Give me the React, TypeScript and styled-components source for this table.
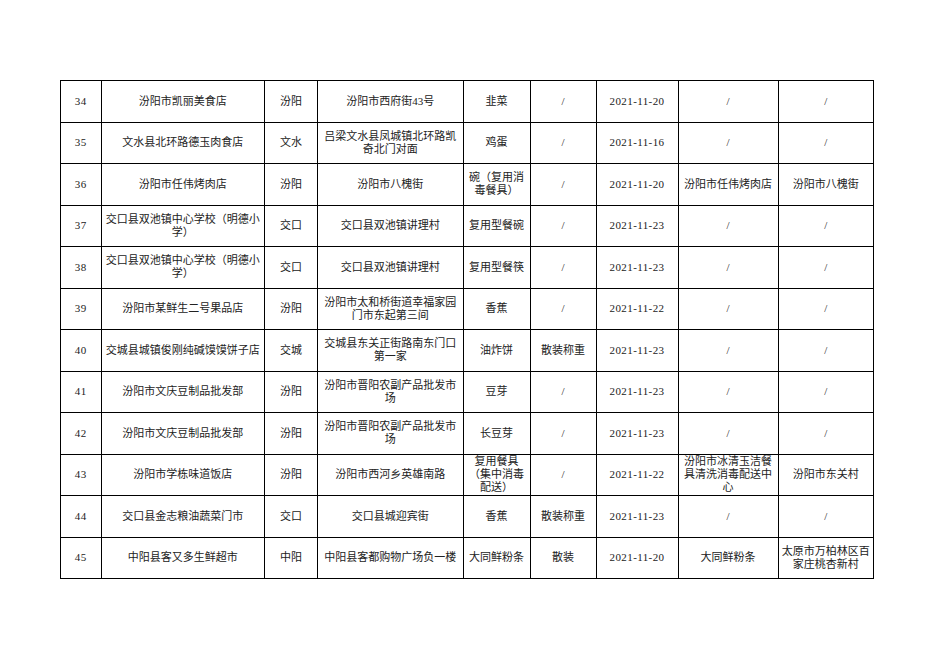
import styled, { createGlobalStyle } from "styled-components";

const GlobalStyle = createGlobalStyle`
    html, body {
        margin: 0;
        padding: 0;
        background: #ffffff;
    }
`;

const Page = styled.div`
    padding: 80px 0 0 60px;
    font-family: "Liberation Serif", "Noto Sans CJK SC", serif;
    color: #222;
`;

const Table = styled.table`
    width: 813px;
    table-layout: fixed;
    border-collapse: collapse;
    border: 1px solid #000;
`;

const Row = styled.tr`
    height: 41.5px;
`;

const Cell = styled.td<{ $numeric?: boolean }>`
    border: 1px solid #000;
    padding: 0 3px;
    font-size: 11px;
    line-height: 13px;
    letter-spacing: ${(p) => (p.$numeric ? "0.4px" : "0")};
    text-align: center;
    vertical-align: middle;
    word-break: break-all;
`;

type Record = {
    no: number;
    name: string;
    area: string;
    address: string;
    food: string;
    spec: string;
    date: string;
    maker: string;
    makerAddress: string;
};

const widths = [40.5, 163.5, 53, 145.5, 67, 66, 82, 100, 95.5];

const records: Record[] = [
    { no: 34, name: "汾阳市凯丽美食店", area: "汾阳", address: "汾阳市西府街43号", food: "韭菜", spec: "/", date: "2021-11-20", maker: "/", makerAddress: "/" },
    { no: 35, name: "文水县北环路德玉肉食店", area: "文水", address: "吕梁文水县凤城镇北环路凯奇北门对面", food: "鸡蛋", spec: "/", date: "2021-11-16", maker: "/", makerAddress: "/" },
    { no: 36, name: "汾阳市任伟烤肉店", area: "汾阳", address: "汾阳市八槐街", food: "碗（复用消毒餐具）", spec: "/", date: "2021-11-20", maker: "汾阳市任伟烤肉店", makerAddress: "汾阳市八槐街" },
    { no: 37, name: "交口县双池镇中心学校（明德小学）", area: "交口", address: "交口县双池镇讲理村", food: "复用型餐碗", spec: "/", date: "2021-11-23", maker: "/", makerAddress: "/" },
    { no: 38, name: "交口县双池镇中心学校（明德小学）", area: "交口", address: "交口县双池镇讲理村", food: "复用型餐筷", spec: "/", date: "2021-11-23", maker: "/", makerAddress: "/" },
    { no: 39, name: "汾阳市某鲜生二号果品店", area: "汾阳", address: "汾阳市太和桥街道幸福家园门市东起第三间", food: "香蕉", spec: "/", date: "2021-11-22", maker: "/", makerAddress: "/" },
    { no: 40, name: "交城县城镇俊刚纯碱馍馍饼子店", area: "交城", address: "交城县东关正街路南东门口第一家", food: "油炸饼", spec: "散装称重", date: "2021-11-23", maker: "/", makerAddress: "/" },
    { no: 41, name: "汾阳市文庆豆制品批发部", area: "汾阳", address: "汾阳市晋阳农副产品批发市场", food: "豆芽", spec: "/", date: "2021-11-23", maker: "/", makerAddress: "/" },
    { no: 42, name: "汾阳市文庆豆制品批发部", area: "汾阳", address: "汾阳市晋阳农副产品批发市场", food: "长豆芽", spec: "/", date: "2021-11-23", maker: "/", makerAddress: "/" },
    { no: 43, name: "汾阳市学栋味道饭店", area: "汾阳", address: "汾阳市西河乡英雄南路", food: "复用餐具（集中消毒配送）", spec: "/", date: "2021-11-22", maker: "汾阳市冰清玉洁餐具清洗消毒配送中心", makerAddress: "汾阳市东关村" },
    { no: 44, name: "交口县金志粮油蔬菜门市", area: "交口", address: "交口县城迎宾街", food: "香蕉", spec: "散装称重", date: "2021-11-23", maker: "/", makerAddress: "/" },
    { no: 45, name: "中阳县客又多生鲜超市", area: "中阳", address: "中阳县客都购物广场负一楼", food: "大同鲜粉条", spec: "散装", date: "2021-11-20", maker: "大同鲜粉条", makerAddress: "太原市万柏林区百家庄桃杏新村" },
];

function App() {
    return (
        <Page>
            <GlobalStyle />
            <Table>
                <colgroup>
                    {widths.map((w, i) => (
                        <col key={i} style={{ width: w }} />
                    ))}
                </colgroup>
                <tbody>
                    {records.map((r) => (
                        <Row key={r.no}>
                            <Cell $numeric>{r.no}</Cell>
                            <Cell>{r.name}</Cell>
                            <Cell>{r.area}</Cell>
                            <Cell>{r.address}</Cell>
                            <Cell>{r.food}</Cell>
                            <Cell>{r.spec}</Cell>
                            <Cell $numeric>{r.date}</Cell>
                            <Cell>{r.maker}</Cell>
                            <Cell>{r.makerAddress}</Cell>
                        </Row>
                    ))}
                </tbody>
            </Table>
        </Page>
    );
}

export default App;
